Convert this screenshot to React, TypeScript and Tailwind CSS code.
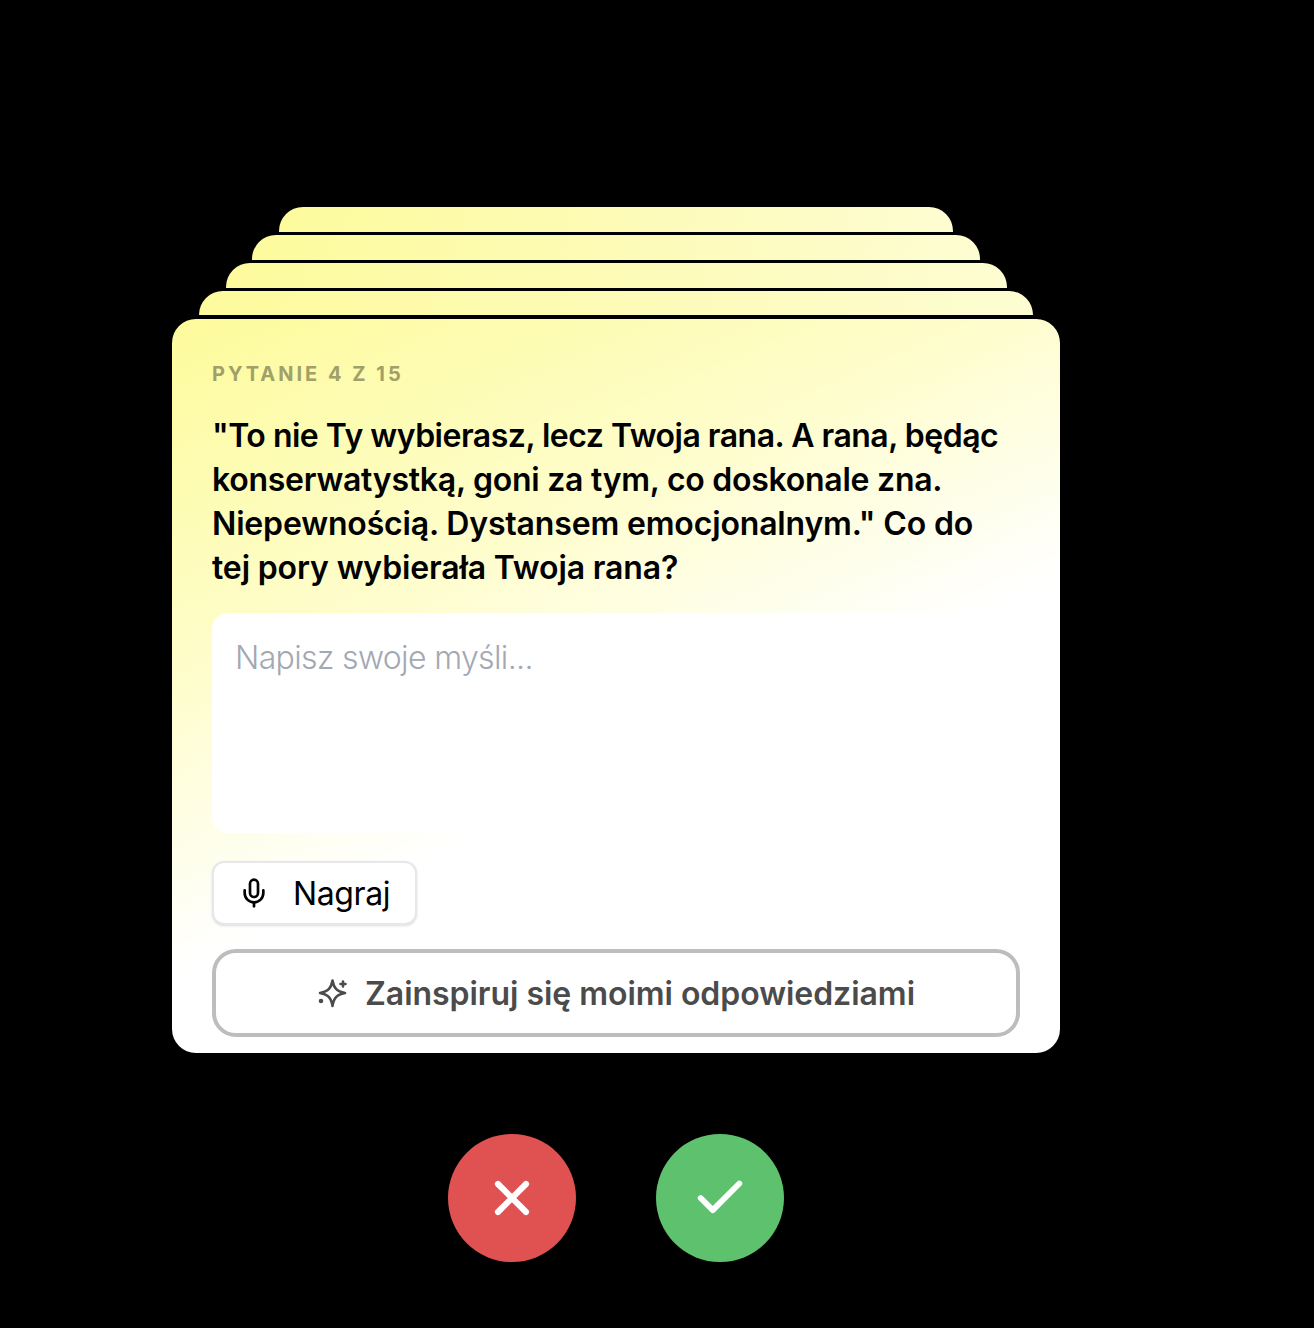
import React from "react";
import { Mic, X, Check } from "lucide-react";

const font = "font-['Inter',sans-serif]";

function Strip({ width, last }: { width: string; last?: boolean }) {
  return <div className={`${width} ${last ? "h-[24px] mb-[4px]" : "h-[24.5px] mb-[3.5px]"} rounded-t-[24px] bg-[linear-gradient(100deg,#fdfb9d_0%,#fdfbb4_45%,#fdfdd2_100%)]`} />;
}

function SparkleIcon() {
  return (
    <svg width="32" height="32" viewBox="0 0 32 32" fill="none" stroke="#4b4b4b" strokeWidth="2.6" strokeLinejoin="round" strokeLinecap="round">
      <path d="M15.5 3.5 C16.8 11 19.5 14.3 28 16 C19.5 17.7 16.8 21 15.5 29 C14.2 21 11.5 17.7 3 16 C11.5 14.3 14.2 11 15.5 3.5 Z" />
      <path d="M26 4.5v5M23.5 7h5" />
      <circle cx="4" cy="24" r="1" fill="#4b4b4b" />
    </svg>
  );
}

export default function App() {
  return (
    <div className={`min-h-screen w-full bg-black ${font}`}>
      <div className="w-[888px] ml-[172px] pt-[207px] flex flex-col items-center">
        <Strip width="w-[674px]" />
        <Strip width="w-[728px]" />
        <Strip width="w-[781px]" />
        <Strip width="w-[834px]" last />
        <div className="w-full h-[734px] rounded-[24px] px-10 pt-[42px] bg-[linear-gradient(156deg,#fdfb9b_0%,#fefdcb_32%,#ffffff_58%)]">
          <div className="text-[20px] leading-[26px] font-bold tracking-[0.15em] text-[#a0a068]">PYTANIE 4 Z 15</div>
          <p className="mt-[27px] text-[32px] leading-[44px] font-semibold text-black">
            <span className="block tracking-[-0.5px]">"To nie Ty wybierasz, lecz Twoja rana. A rana, będąc</span>
            <span className="block tracking-[-0.26px]">konserwatystką, goni za tym, co doskonale zna.</span>
            <span className="block tracking-[-0.16px]">Niepewnością. Dystansem emocjonalnym." Co do</span>
            <span className="block tracking-[-0.14px]">tej pory wybierała Twoja rana?</span>
          </p>
          <textarea
            placeholder="Napisz swoje myśli..."
            className="mt-[23px] block w-full h-[220px] resize-none rounded-2xl bg-white pl-[23px] pr-6 pt-[23px] pb-[21px] text-[32px] leading-[44px] font-light tracking-[-0.02em] outline-none placeholder:text-[#a3a8b2]"
          />
          <button className="mt-7 flex h-16 w-[205px] items-center gap-[23px] rounded-xl border-2 border-[#e5e7eb] bg-white pl-6 text-[32px] text-black shadow-sm">
            <Mic size={32} strokeWidth={2} />
            <span className="pt-[1px] tracking-[-0.4px]">Nagraj</span>
          </button>
          <button className="mt-6 flex h-[88px] w-full items-center justify-center gap-4 rounded-3xl border-4 border-[#bdbdbd] bg-white text-[32px] font-semibold text-[#4b4b4b] tracking-[-0.04px]">
            <SparkleIcon />
            <span className="pt-[2px]">Zainspiruj się moimi odpowiedziami</span>
          </button>
        </div>
        <div className="mt-[81px] flex gap-20">
          <button className="flex h-32 w-32 items-center justify-center rounded-full bg-[#e05252] text-white">
            <X size={56} strokeWidth={2.6} />
          </button>
          <button className="flex h-32 w-32 items-center justify-center rounded-full bg-[#5ec16e] text-white">
            <Check size={58} strokeWidth={2.4} />
          </button>
        </div>
      </div>
    </div>
  );
}
